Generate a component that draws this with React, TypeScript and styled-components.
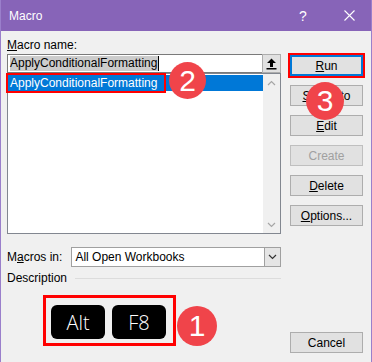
import styled, { createGlobalStyle } from "styled-components";

const Global = createGlobalStyle`
    body {
        margin: 0;
        font-family: "Segoe UI", "Liberation Sans", Arial, sans-serif;
        font-size: 12px;
    }
`;

const Window = styled.div`
    position: relative;
    width: 372px;
    height: 362px;
    box-sizing: border-box;
    border-left: 1px solid #9a7fcb;
    border-right: 1px solid #9a7fcb;
    background: #f0f0f0;
    display: flex;
    flex-direction: column;
    overflow: hidden;
`;

const TitleBar = styled.div`
    height: 31px;
    flex-shrink: 0;
    background: #8764b8;
    color: #fff;
    display: flex;
    align-items: center;
    margin: 0 -1px;
`;

const Title = styled.div`
    flex: 1;
    padding-left: 9px;
    font-size: 12px;
`;

const TitleButton = styled.div`
    width: 46px;
    height: 31px;
    display: flex;
    align-items: center;
    justify-content: center;
    font-size: 14px;
`;

const Body = styled.div`
    flex: 1;
    display: flex;
    gap: 9px;
    padding: 6px 8px 9px 6px;
`;

const LeftCol = styled.div`
    width: 274px;
    display: flex;
    flex-direction: column;
`;

const Label = styled.div`
    line-height: 16px;
    color: #000;
    white-space: nowrap;
    u {
        text-decoration: underline;
    }
`;

const NameRow = styled.div`
    display: flex;
    height: 19px;
    margin-top: 1px;
`;

const NameInput = styled.div`
    flex: 1;
    background: #fff;
    border: 1px solid #7a7a7a;
    border-right: none;
    display: flex;
    align-items: center;
    padding-left: 2px;
`;

const Selected = styled.span`
    background: #cccccc;
    line-height: 15px;
    padding-right: 1px;
    border-right: 1px solid #000;
`;

const ArrowButton = styled.div`
    width: 19px;
    background: #e1e1e1;
    border: 1px solid #adadad;
    box-sizing: border-box;
    display: flex;
    align-items: center;
    justify-content: center;
`;

const ListBox = styled.div`
    height: 161px;
    box-sizing: border-box;
    border: 1px solid #828790;
    background: #fff;
    display: flex;
`;

const Items = styled.div`
    flex: 1;
    padding-top: 1px;
`;

const Item = styled.div`
    height: 16px;
    background: #0078d7;
    color: #fff;
    display: flex;
    align-items: center;
`;

const ItemText = styled.span`
    display: inline-block;
    line-height: 16px;
    padding: 0 7px 0 2px;
    outline: 2px solid #ff0000;
`;

const ScrollBar = styled.div`
    width: 17px;
    background: #f0f0f0;
    display: flex;
    flex-direction: column;
    justify-content: space-between;
`;

const ScrollCell = styled.div`
    height: 17px;
    display: flex;
    align-items: center;
    justify-content: center;
`;

const MacrosRow = styled.div`
    display: flex;
    align-items: center;
    margin-top: 13px;
    gap: 9px;
`;

const Combo = styled.div`
    flex: 1;
    height: 20px;
    box-sizing: border-box;
    background: #fff;
    border: 1px solid #a0a0a0;
    display: flex;
    align-items: center;
    padding-left: 3px;
`;

const ComboText = styled.span`
    flex: 1;
`;

const ComboButton = styled.div`
    width: 17px;
    height: 20px;
    box-sizing: border-box;
    margin-right: -1px;
    background: #e5e5e5;
    border: 1px solid #a0a0a0;
    display: flex;
    align-items: center;
    justify-content: center;
`;

const DescRow = styled.div`
    display: flex;
    align-items: center;
    margin-top: 3px;
`;

const Rule = styled.div`
    flex: 1;
    height: 1px;
    background: #dcdcdc;
    margin-left: 8px;
`;

const KeysRow = styled.div`
    display: flex;
    align-items: flex-end;
    margin: 9px 0 0 36px;
    gap: 1px;
`;

const KeysBox = styled.div`
    display: flex;
    gap: 7px;
    padding: 7px 7px 4px 5px;
    border: 3px solid #ff0000;
`;

const Key = styled.div`
    width: 54px;
    height: 34px;
    border-radius: 6px;
    background: #000;
    color: #fff;
    display: flex;
    align-items: center;
    justify-content: center;
    font-family: "Open Sans", sans-serif;
    font-weight: 300;
    font-size: 20px;
`;

const Badge = styled.div<{ $size?: number }>`
    width: ${({ $size }) => $size ?? 38}px;
    height: ${({ $size }) => $size ?? 38}px;
    border-radius: 50%;
    background: #f0444a;
    color: #fff;
    display: flex;
    align-items: center;
    justify-content: center;
    font-family: "Liberation Sans", Arial, sans-serif;
    font-size: 30px;
`;

const FloatingBadge = styled(Badge)<{ $left: number; $top: number }>`
    position: absolute;
    left: ${({ $left }) => $left}px;
    top: ${({ $top }) => $top}px;
`;

const RightCol = styled.div`
    width: 73px;
    display: flex;
    flex-direction: column;
    gap: 9px;
    padding-top: 18px;
`;

const Button = styled.div<{ $default?: boolean; $disabled?: boolean }>`
    height: 21px;
    box-sizing: border-box;
    background: #e1e1e1;
    border: 1px solid ${({ $default, $disabled }) =>
        $default ? "#0078d7" : $disabled ? "#bfbfbf" : "#adadad"};
    box-shadow: ${({ $default }) => ($default ? "inset 0 0 0 1px #0078d7" : "none")};
    outline: ${({ $default }) => ($default ? "2px solid #ff0000" : "none")};
    color: ${({ $disabled }) => ($disabled ? "#a0a0a0" : "#000")};
    display: flex;
    align-items: center;
    justify-content: center;
`;

const CancelButton = styled(Button)`
    margin-top: auto;
`;

const Chevron = ({ up, color }: { up?: boolean; color: string }) => (
    <svg width="9" height="6" viewBox="0 0 9 6">
        <polyline
            points={up ? "1,5 4.5,1.5 8,5" : "1,1 4.5,4.5 8,1"}
            fill="none"
            stroke={color}
            strokeWidth="1.2"
        />
    </svg>
);

export default function App() {
    return (
        <Window>
            <Global />
            <TitleBar>
                <Title>Macro</Title>
                <TitleButton>?</TitleButton>
                <TitleButton>
                    <svg width="11" height="11" viewBox="0 0 11 11">
                        <path d="M0.5 0.5 L10.5 10.5 M10.5 0.5 L0.5 10.5" stroke="#fff" strokeWidth="1.1" />
                    </svg>
                </TitleButton>
            </TitleBar>

            <Body>
                <LeftCol>
                    <Label>
                        <u>M</u>acro name:
                    </Label>
                    <NameRow>
                        <NameInput>
                            <Selected>ApplyConditionalFormatting</Selected>
                        </NameInput>
                        <ArrowButton>
                            <svg width="11" height="12" viewBox="0 0 11 12">
                                <path d="M5.5 0.5 L10 5 L7 5 L7 9 L4 9 L4 5 L1 5 Z" fill="#000" />
                                <rect x="0.5" y="10" width="10" height="1.5" fill="#000" />
                            </svg>
                        </ArrowButton>
                    </NameRow>
                    <ListBox>
                        <Items>
                            <Item>
                                <ItemText>ApplyConditionalFormatting</ItemText>
                            </Item>
                        </Items>
                        <ScrollBar>
                            <ScrollCell>
                                <Chevron up color="#a6a6a6" />
                            </ScrollCell>
                            <ScrollCell>
                                <Chevron color="#a6a6a6" />
                            </ScrollCell>
                        </ScrollBar>
                    </ListBox>

                    <MacrosRow>
                        <Label>
                            M<u>a</u>cros in:
                        </Label>
                        <Combo>
                            <ComboText>All Open Workbooks</ComboText>
                            <ComboButton>
                                <Chevron color="#333" />
                            </ComboButton>
                        </Combo>
                    </MacrosRow>

                    <DescRow>
                        <Label>Description</Label>
                        <Rule />
                    </DescRow>

                    <KeysRow>
                        <KeysBox>
                            <Key>Alt</Key>
                            <Key>F8</Key>
                        </KeysBox>
                        <Badge $size={40}>1</Badge>
                    </KeysRow>
                </LeftCol>

                <RightCol>
                    <Button $default>
                        <span><u>R</u>un</span>
                    </Button>
                    <Button>
                        <span><u>S</u>tep Into</span>
                    </Button>
                    <Button>
                        <span><u>E</u>dit</span>
                    </Button>
                    <Button $disabled>Create</Button>
                    <Button>
                        <span><u>D</u>elete</span>
                    </Button>
                    <Button>
                        <span><u>O</u>ptions...</span>
                    </Button>
                    <CancelButton>Cancel</CancelButton>
                </RightCol>
            </Body>

            <FloatingBadge $left={168} $top={62} $size={37}>2</FloatingBadge>
            <FloatingBadge $left={305} $top={82} $size={38}>3</FloatingBadge>
        </Window>
    );
}
